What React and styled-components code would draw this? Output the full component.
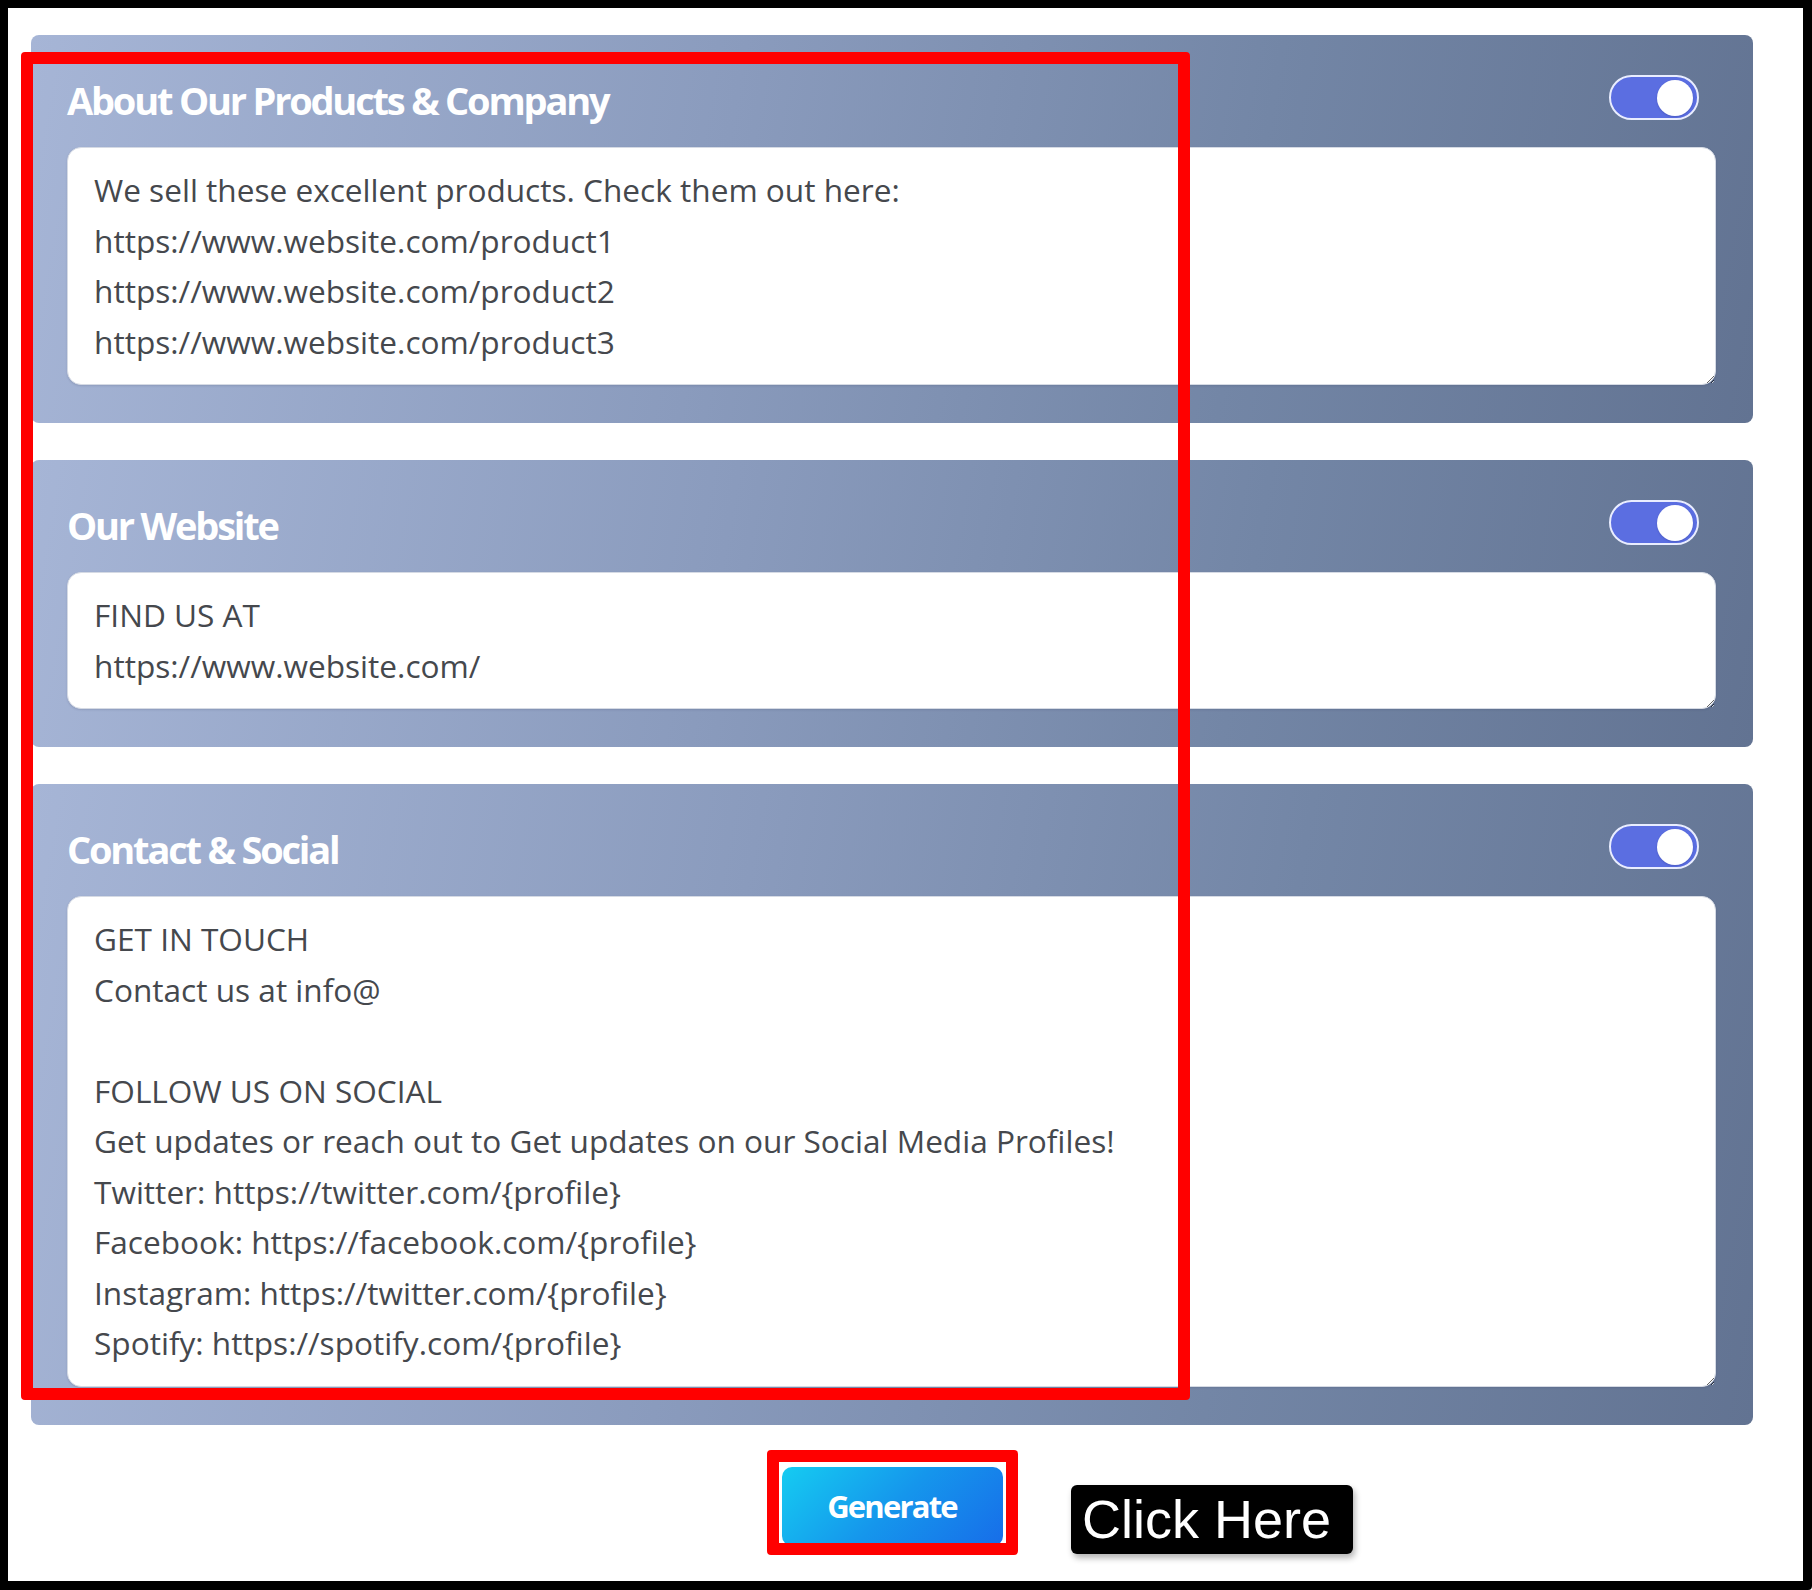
import React from 'react'
import styled, { createGlobalStyle } from 'styled-components'

const GlobalStyle = createGlobalStyle`
html, body {
    margin: 0;
    padding: 0;
    background: #fff;
}
body {
    font-family: "Open Sans", "Noto Sans", sans-serif;
}
`

const sections = [
    {
        title: 'About Our Products & Company',
        rows: 4,
        text: 'We sell these excellent products. Check them out here:\nhttps://www.website.com/product1\nhttps://www.website.com/product2\nhttps://www.website.com/product3',
    },
    {
        title: 'Our Website',
        rows: 2,
        text: 'FIND US AT\nhttps://www.website.com/',
    },
    {
        title: 'Contact & Social',
        rows: 9,
        text: 'GET IN TOUCH\nContact us at info@\n\nFOLLOW US ON SOCIAL\nGet updates or reach out to Get updates on our Social Media Profiles!\nTwitter: https://twitter.com/{profile}\nFacebook: https://facebook.com/{profile}\nInstagram: https://twitter.com/{profile}\nSpotify: https://spotify.com/{profile}',
    },
]

const Section = ({ title, rows, text }) => {
    return (
        <Panel>
            <PanelHeader>
                <Title>{title}</Title>
                <Toggle role="switch" aria-checked="true">
                    <Knob />
                </Toggle>
            </PanelHeader>
            <Field rows={rows} defaultValue={text} spellCheck={false} />
        </Panel>
    )
}

const App = () => {
    return (
        <>
            <GlobalStyle />
            <Frame>
                <Stack>
                    {sections.map((s) => (
                        <Section key={s.title} {...s} />
                    ))}
                </Stack>
                <ButtonRow>
                    <GenerateButton type="button">Generate</GenerateButton>
                </ButtonRow>

                {/* annotation overlays */}
                <RedBox $left={13} $top={44} $w={1169} $h={1348} />
                <RedBox $left={759} $top={1442} $w={251} $h={105} />
                <Callout>Click Here</Callout>
            </Frame>
        </>
    )
}

const Frame = styled.div`
position: relative;
box-sizing: border-box;
width: 1812px;
height: 1590px;
border: 8px solid #000;
border-right-width: 9px;
border-bottom-width: 9px;
border-bottom-right-radius: 4px;
padding: 27px 0 0 23px;
background: #fff;
overflow: hidden;
`

const Stack = styled.div`
display: flex;
flex-direction: column;
gap: 37px;
width: 1722px;
`

const Panel = styled.section`
box-sizing: border-box;
padding: 36px 37px 38px 36px;
border-radius: 8px;
background: linear-gradient(100deg, #a6b5d6 0%, #8a9bbd 40%, #7386a6 70%, #627392 100%);
`

const PanelHeader = styled.div`
display: flex;
align-items: center;
justify-content: space-between;
height: 58px;
margin-bottom: 18px;
`

const Title = styled.h2`
margin: 0;
color: #fff;
font-family: "Open Sans", sans-serif;
font-weight: 700;
font-size: 38px;
letter-spacing: -2.2px;
`

const Toggle = styled.span`
box-sizing: border-box;
display: flex;
align-items: center;
justify-content: flex-end;
width: 90px;
height: 45px;
margin: -5px 17px 0 0;
padding: 0 4px;
border: 2px solid #e9edff;
border-radius: 999px;
background: #5b6ee1;
cursor: pointer;
`

const Knob = styled.span`
width: 36px;
height: 36px;
border-radius: 50%;
background: #fff;
box-shadow: 0 1px 2px rgba(30, 40, 120, 0.25);
`

const Field = styled.textarea`
display: block;
box-sizing: border-box;
width: 100%;
margin: 0;
padding: 17px 26px;
border: 1px solid #d5dae4;
border-radius: 14px;
background: #fff;
color: #45484d;
font-family: "Open Sans", sans-serif;
font-size: 31.6px;
line-height: 50.5px;
resize: vertical;
overflow: hidden;
outline: none;
box-shadow: 0 1px 2px rgba(40, 50, 80, 0.15);
`

const ButtonRow = styled.div`
display: flex;
justify-content: center;
width: 1722px;
margin-top: 42px;
`

const GenerateButton = styled.button`
width: 221px;
height: 79px;
border: none;
border-radius: 10px;
background: linear-gradient(135deg, #15ccf1 0%, #1596ec 50%, #176de9 100%);
color: #fff;
font-family: "Open Sans", sans-serif;
font-weight: 700;
font-size: 31px;
letter-spacing: -1.8px;
cursor: pointer;
`

const RedBox = styled.div`
position: absolute;
box-sizing: border-box;
left: ${(p) => p.$left}px;
top: ${(p) => p.$top}px;
width: ${(p) => p.$w}px;
height: ${(p) => p.$h}px;
border: 12px solid #ff0000;
border-radius: 4px;
pointer-events: none;
`

const Callout = styled.div`
position: absolute;
left: 1063px;
top: 1477px;
box-sizing: border-box;
width: 282px;
height: 69px;
padding: 0 11px;
border-radius: 6px;
background: #000;
color: #fff;
font-family: "Liberation Sans", Arial, sans-serif;
font-size: 54px;
line-height: 69px;
white-space: nowrap;
box-shadow: 2px 4px 6px rgba(0, 0, 0, 0.3);
`

export default App
